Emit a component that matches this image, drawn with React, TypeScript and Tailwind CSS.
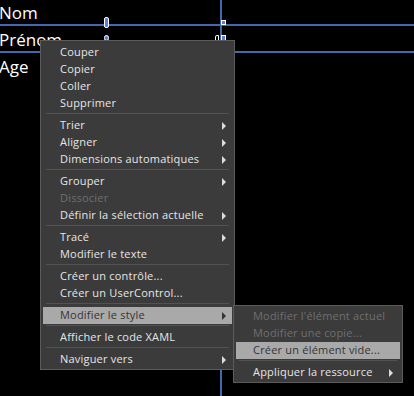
type Item = { label: string; sub?: boolean; disabled?: boolean; active?: boolean } | 'sep';

const mainItems: Item[] = [
  { label: 'Couper' },
  { label: 'Copier' },
  { label: 'Coller' },
  { label: 'Supprimer' },
  'sep',
  { label: 'Trier', sub: true },
  { label: 'Aligner', sub: true },
  { label: 'Dimensions automatiques', sub: true },
  'sep',
  { label: 'Grouper', sub: true },
  { label: 'Dissocier', disabled: true },
  { label: 'Définir la sélection actuelle', sub: true },
  'sep',
  { label: 'Tracé', sub: true },
  { label: 'Modifier le texte' },
  'sep',
  { label: 'Créer un contrôle...' },
  { label: 'Créer un UserControl...' },
  'sep',
  { label: 'Modifier le style', sub: true, active: true },
  'sep',
  { label: 'Afficher le code XAML' },
  'sep',
  { label: 'Naviguer vers', sub: true },
];

const subItems: Item[] = [
  { label: "Modifier l'élément actuel", disabled: true },
  { label: 'Modifier une copie...', disabled: true },
  { label: 'Créer un élément vide...', active: true },
  'sep',
  { label: 'Appliquer la ressource', sub: true },
];

function MenuRows({ items, pr }: { items: Item[]; pr: string }) {
  return (
    <>
      {items.map((it, i) =>
        it === 'sep' ? (
          <div key={i} className="h-[5px] pt-[1px] mx-[3px]">
            <div className="h-px bg-[#525252]" />
          </div>
        ) : (
          <div
            key={i}
            className={`h-[17px] flex items-center justify-between pl-[17px] ${pr} ${
              it.active ? 'bg-[#a9a9a9] text-[#353535]' : it.disabled ? 'text-[#6f6f6f]' : 'text-[#e6e6e6]'
            }`}
          >
            <span className="whitespace-nowrap tracking-[0.2px]">{it.label}</span>
            {it.sub && (
              <span
                className={`w-0 h-0 border-y-[4px] border-y-transparent border-l-[4px] ${
                  it.active ? 'border-l-[#333]' : 'border-l-[#dcdcdc]'
                }`}
              />
            )}
          </div>
        )
      )}
    </>
  );
}

export default function App() {
  return (
    <div className="relative w-[414px] h-[396px] bg-black overflow-hidden font-['Open_Sans',sans-serif]">
      {/* design surface guides */}
      <div className="absolute left-0 right-0 top-[24px] h-[2px] bg-[#4468b0]" />
      <div className="absolute left-0 right-0 top-[51px] h-[2px] bg-[#4468b0]" />
      <div className="absolute top-0 bottom-0 left-[220px] w-[2px] bg-[#4468b0]" />

      {/* adorners */}
      <div className="absolute left-[104px] top-[17px] w-[5px] h-[11px] rounded-[2px] border border-white bg-[#5b80d0]" />
      <div className="absolute left-[104px] top-[35px] w-[5px] h-[6px] rounded-full border border-white bg-[#5b80d0]" />
      <div className="absolute left-[221px] top-[20px] w-[5px] h-[5px] border border-white bg-[#5b80d0]" />
      <div className="absolute left-[215px] top-[35px] w-[4px] h-[6px] rounded-tl-[2px] border border-white bg-black" />
      <div className="absolute left-[221px] top-[35px] w-[5px] h-[6px] border border-white bg-[#5b80d0]" />

      <div className="flex flex-col -mt-px -ml-px text-white text-[17px] leading-[27px]">
        <span>Nom</span>
        <span>Prénom</span>
        <span>Age</span>
      </div>

      {/* context menu */}
      <div className="absolute left-[40px] top-[40px] w-[195px] border border-[#5c5c5c] bg-[#3b3b3b] pt-[3px] pb-px px-[2px] text-[11px]">
        <MenuRows items={mainItems} pr="pr-[6px]" />
      </div>

      {/* submenu */}
      <div className="absolute left-[233px] top-[305px] w-[170px] border border-[#5c5c5c] bg-[#3b3b3b] pt-[2px] pb-px px-[2px] text-[11px]">
        <MenuRows items={subItems} pr="pr-[7px]" />
      </div>
    </div>
  );
}
